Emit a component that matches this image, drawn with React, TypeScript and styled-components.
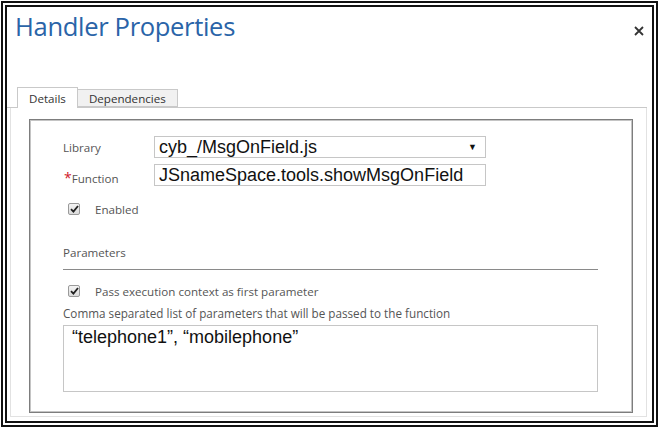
import React from "react";
import styled, { createGlobalStyle } from "styled-components";

const GlobalStyle = createGlobalStyle`
  html, body {
    margin: 0;
    padding: 0;
    background: #fff;
  }
  * {
    box-sizing: border-box;
  }
`;

const Frame = styled.div`
  width: 661px;
  height: 429px;
  padding: 1px 3px 2px 1px;
  background: #fff;
`;

const Dialog = styled.div`
  height: 100%;
  border: 6px double #111;
  display: flex;
  flex-direction: column;
  font-family: "Open Sans", "Noto Sans", sans-serif;
`;

const Header = styled.div`
  display: flex;
  justify-content: space-between;
  align-items: flex-start;
  padding: 2px 8px 0 8px;
  height: 81px;
`;

const Title = styled.h1`
  margin: 0;
  font-size: 25.6px;
  font-weight: 400;
  line-height: 36px;
  color: #2a64a8;
  letter-spacing: -0.35px;
`;

const Close = styled.button`
  border: none;
  background: none;
  padding: 0;
  margin-top: 17px;
  width: 10px;
  height: 10px;
  display: flex;
  cursor: pointer;
`;

const TabStrip = styled.div`
  display: flex;
  align-items: flex-end;
  padding-left: 10px;
  margin-right: 5px;
  height: 20px;
  border-bottom: 1px solid #c9c9c9;
`;

const Tab = styled.div<{ $active?: boolean }>`
  height: ${(p) => (p.$active ? "21px" : "18px")};
  margin-bottom: ${(p) => (p.$active ? "-1px" : "0")};
  padding: 0 11px;
  display: flex;
  align-items: center;
  font-size: 11.6px;
  color: #333;
  background: ${(p) => (p.$active ? "#fff" : "#f1f1f1")};
  border: 1px solid #c9c9c9;
  border-bottom: ${(p) => (p.$active ? "none" : "1px solid #c9c9c9")};
  border-left: ${(p) => (p.$active ? "1px solid #c9c9c9" : "none")};
`;

const TabPanel = styled.div`
  flex: 1;
  margin: 0 5px 4px 3px;
  border: 1px solid #e2e2e2;
  border-top: none;
  padding: 11px 13px 3px 18px;
  display: flex;
`;

const Section = styled.div`
  flex: 1;
  border: 1px solid #7d7d7d;
  box-shadow: inset 0 0 0 1px #c4c4c4;
  padding: 16px 0 0 33px;
  display: flex;
  flex-direction: column;
  align-items: flex-start;
`;

const FormGrid = styled.div`
  display: grid;
  grid-template-columns: 91px 332px;
  row-gap: 6px;
  align-items: center;
`;

const Label = styled.span`
  font-size: 11.6px;
  color: #555;
  line-height: 15px;
`;

const LowLabel = styled(Label)`
  padding-top: 7px;
`;

const Required = styled.span`
  color: #d0202a;
  font-size: 14px;
  line-height: 11px;
  margin-left: 1px;
`;

const Field = styled.div`
  height: 22px;
  border: 1px solid #c6c6c6;
  background: #fff;
  display: flex;
  align-items: center;
  justify-content: space-between;
  padding: 0 8px 0 4px;
  font-family: "Liberation Sans", Arial, sans-serif;
  font-size: 18px;
  color: #111;
`;

const Arrow = styled.span`
  font-size: 9px;
  color: #111;
`;

const CheckRow = styled.label<{ $top: number }>`
  display: flex;
  align-items: center;
  gap: 15px;
  height: 14px;
  margin-top: ${(p) => p.$top}px;
  padding-left: 5px;
  font-size: 11.6px;
  color: #555;
`;

const Box = styled.span`
  width: 12px;
  height: 12px;
  border: 1px solid #9a9a9a;
  border-radius: 2px;
  background: linear-gradient(#f4f4f4, #dcdcdc);
  display: flex;
  align-items: center;
  justify-content: center;
`;

const Group = styled.div`
  width: 535px;
  margin-top: 24px;
  padding-bottom: 7px;
  border-bottom: 1px solid #8a8a8a;
`;

const Hint = styled.div`
  margin-top: 8px;
  font-size: 11.7px;
  line-height: 15px;
  color: #555;
`;

const ParamBox = styled.div`
  width: 535px;
  height: 67px;
  margin-top: 4px;
  border: 1px solid #c6c6c6;
  padding: 1px 8px;
  font-family: "Liberation Sans", Arial, sans-serif;
  font-size: 18px;
  line-height: 20px;
  color: #111;
`;

const Check = () => (
  <Box>
    <svg width="9" height="8" viewBox="0 0 9 8">
      <path d="M1 4.2 L3.4 6.6 L8 1" fill="none" stroke="#222" strokeWidth="1.8" />
    </svg>
  </Box>
);

export default function App() {
  return (
    <Frame>
      <GlobalStyle />
      <Dialog>
        <Header>
          <Title>Handler Properties</Title>
          <Close aria-label="close">
            <svg width="10" height="10" viewBox="0 0 10 10">
              <path d="M1 1 L9 9 M9 1 L1 9" stroke="#333" strokeWidth="1.8" />
            </svg>
          </Close>
        </Header>
        <TabStrip>
          <Tab $active>Details</Tab>
          <Tab>Dependencies</Tab>
        </TabStrip>
        <TabPanel>
          <Section>
            <FormGrid>
              <Label>Library</Label>
              <Field>
                cyb_/MsgOnField.js
                <Arrow>▼</Arrow>
              </Field>
              <LowLabel>
                <Required>*</Required>Function
              </LowLabel>
              <Field>JSnameSpace.tools.showMsgOnField</Field>
            </FormGrid>
            <CheckRow $top={16}>
              <Check />
              Enabled
            </CheckRow>
            <Group>
              <Label>Parameters</Label>
            </Group>
            <CheckRow $top={14}>
              <Check />
              Pass execution context as first parameter
            </CheckRow>
            <Hint>Comma separated list of parameters that will be passed to the function</Hint>
            <ParamBox>“telephone1”, “mobilephone”</ParamBox>
          </Section>
        </TabPanel>
      </Dialog>
    </Frame>
  );
}
